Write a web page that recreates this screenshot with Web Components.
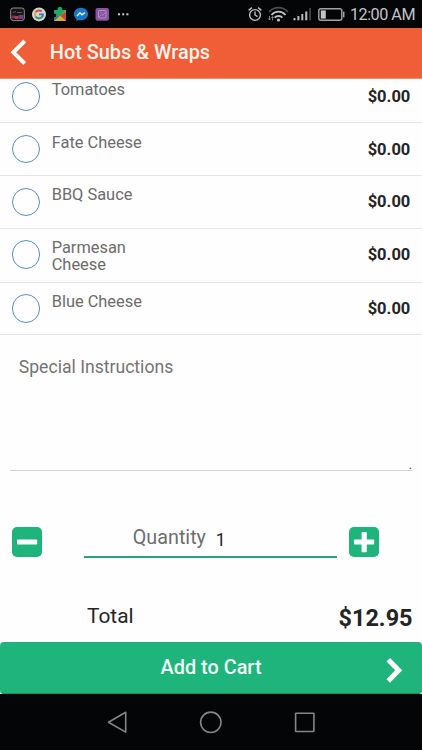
<!DOCTYPE html>
<html lang="en"><head><meta charset="utf-8"><title>Hot Subs &amp; Wraps</title>
<style>
html,body{margin:0;padding:0;background:#fefefe}
body{width:422px;height:750px;overflow:hidden;font-family:Roboto,"Liberation Sans",sans-serif}
</style></head><body>
<order-screen></order-screen>
<script>
const define = (name, markup) => {
  const t = document.createElement('template');
  t.innerHTML = markup;
  customElements.define(name, class extends HTMLElement {
    constructor(){ super(); this.attachShadow({mode:'open'}).append(t.content.cloneNode(true)); }
  });
};

define('status-bar', `<style>
:host{display:flex;align-items:center;height:28px;background:#030507;color:#c3c3c3;box-sizing:border-box}
svg{display:block;flex:none}
.time{font-size:16.2px;letter-spacing:-.5px;line-height:28px;white-space:nowrap;margin-left:5px;padding-top:2px}
</style>
<svg width="345" height="28" viewBox="0 0 345 28" fill="none">
  <rect x="10.7" y="8" width="13.6" height="12.6" rx="2.5" fill="#171517" stroke="#938f92" stroke-width="1"/>
  <path d="M13 12.5l3-1M17 12.5h5" stroke="#77716f" stroke-width=".8"/>
  <path d="M11.5 15.5h4v3h-4z" fill="#7b3550"/><path d="M15 16h3.5v3H15z" fill="#b43f4c"/><path d="M18.5 15h5v4h-5z" fill="#713c85"/>
  <circle cx="39" cy="14.4" r="7" fill="#d5d5d3"/>
  <g stroke-width="1.9"><path d="M41.7 11.5A4 4 0 0 0 35.6 12.3" stroke="#d84a3d"/><path d="M35.6 12.3a4 4 0 0 0 0 4.1" stroke="#dda928"/><path d="M35.6 16.4a4 4 0 0 0 5.8 1.1" stroke="#34955a"/><path d="M41.4 17.5a4 4 0 0 0 1.6-3.1h-4" stroke="#3d72c8"/></g>
  <path d="M54 10h3.6C57.3 5.8 62.7 5.8 62.4 10H66v11H54v-3.5c3 .3 3-4.3 0-4z" fill="#27a566"/>
  <path d="M60 15.5l6-5.5v5.5z" fill="#5cbc57"/><path d="M60 15.5l6-3.5V21z" fill="#c9473a"/><path d="M60 15.5l6 5.5H54z" fill="#d9ab36"/><path d="M55.5 17l4.5-1.5-6 5.5v-3.5z" fill="#2b7fa5"/>
  <path d="M81 7.7c-4 0-7.1 2.8-7.1 6.4 0 2.1 1 3.8 2.6 5V21l2.1-1.1c.8.2 1.6.4 2.4.4 4 0 7.1-2.8 7.1-6.3S85 7.7 81 7.7z" fill="#1977c5"/>
  <path d="M77 16l3-3.2 2 1.9 3-2.1" stroke="#e0e9ed" stroke-width="1.5"/>
  <rect x="95.5" y="8" width="13.5" height="12.7" rx="2" fill="#87529f"/>
  <rect x="98.5" y="10.5" width="7.5" height="7.5" rx=".7" stroke="#b48fc2" stroke-width="1"/><path d="M99 17l2.5-2.5 1.3 1L105.5 11.5M100.3 12.7h1.2" stroke="#b48fc2" stroke-width=".8"/>
  <g fill="#c9c9c9"><rect x="118" y="13.3" width="2" height="2"/><rect x="122.2" y="13.3" width="2" height="2"/><rect x="126.4" y="13.3" width="2" height="2"/></g>
  <g stroke="#bdbdbd" stroke-width="1.4"><circle cx="255" cy="15" r="5.4"/><path d="M255 11.5V15l2.5 1.7M248.6 10.4l3.3-2.8M261.4 10.4l-3.3-2.8"/></g>
  <path d="M269 12a12.5 12.5 0 0 1 19 0" stroke="#4d4d4d" stroke-width="1.7"/><path d="M271.5 15a9 9 0 0 1 14 0M274.6 17.7a5.4 5.4 0 0 1 7.8 0" stroke="#c1c1c1" stroke-width="1.9"/>
  <circle cx="278.5" cy="20" r="1.6" fill="#c1c1c1"/><path d="M269.5 16v4M272.5 16.5v4M268.3 18.5l1.2 1.5 1.2-1.5M271.3 18l1.2-1.4 1.2 1.4" stroke="#999" stroke-width=".8"/>
  <g fill="#b9b9b9"><rect x="293.5" y="18" width="2" height="2.3"/><rect x="297.4" y="16" width="2" height="4.3"/><rect x="301.3" y="14" width="2" height="6.3"/><rect x="305.2" y="11.5" width="2.1" height="8.8"/></g><rect x="309.2" y="8" width="1.8" height="12.3" fill="#444"/>
  <rect x="318.8" y="8.8" width="23" height="11.4" rx="2" stroke="#a3a3a3" stroke-width="1.4"/><rect x="320.8" y="10.4" width="5" height="8.2" fill="#c4c4c4"/><path d="M343.7 11.7v5.6" stroke="#a3a3a3" stroke-width="1.5"/>
</svg><span class="time">12:00 AM</span>`);

define('title-bar', `<style>
:host{display:flex;align-items:center;height:50.5px;background:#f05e37;border-bottom:1px solid #f58a6c;box-sizing:border-box;color:#fff5ee}
svg{display:block;flex:none}
span{font-size:19.9px;font-weight:500;line-height:24px;white-space:nowrap;margin:0 0 0 19.8px}
</style><svg width="30" height="49" viewBox="0 28 30 49" fill="none"><path d="M24.7 41L13.4 52.3L24.7 63.5" stroke="#fff" stroke-width="4"/></svg><span><slot></slot></span>`);

define('topping-row', `<style>
:host{display:flex;height:52.7px;box-sizing:border-box;border-bottom:1.3px solid #e7e7e7;padding:0 11.7px 0 12px;background:#fefefe}
i{box-sizing:border-box;width:28.4px;height:28.4px;border:1.3px solid #568dd0;border-radius:50%;margin-top:11.5px;flex:none}
.name{font-size:16.4px;line-height:16.6px;color:#6c6c6c;width:100px;margin:11.3px auto 0 11.3px}
.price{font-size:16.5px;font-weight:700;line-height:20px;color:#252525;margin-top:16.3px}
</style><i></i><span class="name"><slot></slot></span><span class="price"><slot name="price"></slot></span>`);

define('special-instructions', `<style>
:host{display:flex;justify-content:space-between;align-items:flex-end;height:126px;margin:9.5px 10px 0;border-bottom:1.3px solid #d2d2d2;box-sizing:border-box;color:#747474}
.label{align-self:flex-start;font-size:17.6px;line-height:22px;margin:10.8px 0 0 8.8px}
.end{font-size:12px;line-height:12px;color:#333;margin-bottom:-1px}
</style><span class="label"><slot></slot></span><span class="end">.</span>`);

define('step-button', `<style>
:host{display:block;width:30.4px;height:30.4px;border-radius:5px;background:#1fb47b;flex:none}
svg{display:block}.v{display:none}:host([plus]) .v{display:block}
</style><svg width="30.4" height="30.4" viewBox="0 0 30.4 30.4" fill="#fff"><rect x="5" y="12.4" width="20.2" height="5.2" rx=".8"/><rect class="v" x="12.6" y="5" width="5.2" height="20.2" rx=".8"/></svg>`);

define('quantity-picker', `<style>
:host{display:flex;align-items:flex-start;padding:55.5px 42px 0 11.7px;height:115px;box-sizing:border-box}
.field{box-sizing:border-box;width:253px;height:31.5px;margin:0 11.5px 0 42.2px;border-bottom:2px solid #24a477;display:flex;align-items:flex-start;padding-left:48.5px}
.label{font-size:19.75px;line-height:24px;color:#6e6e6e;width:83px;margin-top:-.5px}
.value{font-size:17.6px;line-height:24px;color:#252525;margin-top:1px}
</style><step-button></step-button><div class="field"><span class="label"><slot></slot></span><span class="value"><slot name="value"></slot></span></div><step-button plus></step-button>`);

define('order-total', `<style>
:host{display:flex;justify-content:space-between;align-items:flex-start;padding:17.7px 9.5px 0 87px;height:56px;box-sizing:border-box;color:#242424}
.label{font-size:20.9px;line-height:24px}.sum{font-size:23.4px;font-weight:700;line-height:28px;margin-top:.8px}
</style><span class="label"><slot></slot></span><span class="sum"><slot name="sum"></slot></span>`);

define('cart-button', `<style>
:host{display:grid;grid-template-columns:1fr auto 1fr;height:52px;background:#1fb47b;border-radius:4px;color:#effff8;box-sizing:border-box;border-bottom:1px solid #168d60}
span{grid-column:2;font-size:19.9px;font-weight:500;line-height:24px;margin-top:14px;white-space:nowrap}
svg{grid-column:3;justify-self:end;display:block}
</style><span><slot></slot></span><svg width="40" height="51" viewBox="382 642 40 51" fill="none"><path d="M388.3 659.7l10.4 10.6-10.4 10.6" stroke="#fff" stroke-width="5"/></svg>`);

define('nav-bar', `<style>
:host{display:block;height:56.5px;background:#030507}svg{display:block}
</style><svg width="422" height="56.5" viewBox="0 693.5 422 56.5" fill="none" stroke="#858585" stroke-width="1.6" stroke-linejoin="round"><path d="M108.5 721.8L125.7 711.8V731.6Z"/><circle cx="210.8" cy="721.8" r="10.2"/><rect x="295.6" y="712.7" width="18.3" height="18.3" rx=".5"/></svg>`);

define('order-screen', `<style>
:host{display:flex;flex-direction:column;width:422px;height:750px;background:#fefefe}
.list{height:257px;overflow:hidden;flex:none}
.cart{background:#fefefe;height:51.5px;flex:none;margin-top:auto}
topping-row:first-child{margin-top:-7.8px}
topping-row.tall{height:54px}
status-bar,title-bar,nav-bar,special-instructions,quantity-picker,order-total{flex:none}
</style>
<status-bar></status-bar>
<title-bar>Hot Subs &amp; Wraps</title-bar>
<div class="list">
<topping-row>Tomatoes<span slot="price">$0.00</span></topping-row>
<topping-row>Fate Cheese<span slot="price">$0.00</span></topping-row>
<topping-row>BBQ Sauce<span slot="price">$0.00</span></topping-row>
<topping-row class="tall">Parmesan<br>Cheese<span slot="price">$0.00</span></topping-row>
<topping-row>Blue Cheese<span slot="price">$0.00</span></topping-row>
</div>
<special-instructions>Special Instructions</special-instructions>
<quantity-picker>Quantity<span slot="value">1</span></quantity-picker>
<order-total>Total<span slot="sum">$12.95</span></order-total>
<div class="cart"><cart-button>Add to Cart</cart-button></div>
<nav-bar></nav-bar>`);
</script>
</body></html>
